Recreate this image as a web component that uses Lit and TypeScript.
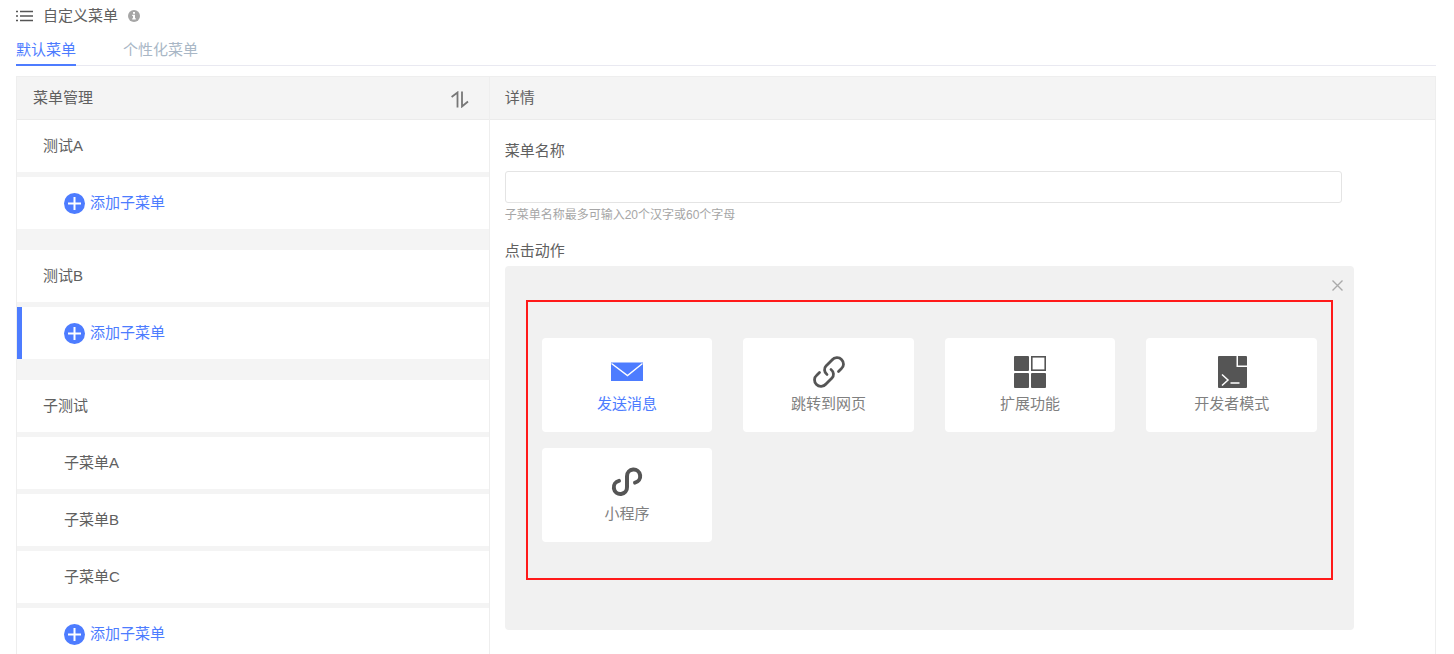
import { LitElement, html, css, svg, nothing } from "lit";
import { customElement, state } from "lit/decorators.js";
import { classMap } from "lit/directives/class-map.js";

interface MenuGroup {
  name: string;
  children: string[];
}

const GROUPS: MenuGroup[] = [
  { name: "测试A", children: [] },
  { name: "测试B", children: [] },
  { name: "子测试", children: ["子菜单A", "子菜单B", "子菜单C"] },
];

const ACTIONS = [
  {
    label: "发送消息",
    icon: svg`<path d="M0 6.500h32V25H0z" fill="currentColor"/><path d="M.5 7.500L16.500 19.500 31.500 7.500" fill="none" stroke="#fff" stroke-width="1.400"/>`,
  },
  {
    label: "跳转到网页",
    icon: svg`<path d="M14 18.500C10.800 16 11 12 13 10L19 4C21.500 1 26 .8 28.500 3.500 31.300 6.300 31 10.500 28.500 12.500L25.500 15.500M18 13.500C21.200 16 21 20 19 22L13 28C10.500 31 6 31.200 3.500 28.500 .7 25.700 1 21.500 3.500 19.500L6.500 16.500" fill="none" stroke="currentColor" stroke-width="2.800" stroke-linecap="round"/>`,
  },
  {
    label: "扩展功能",
    icon: svg`<g fill="currentColor"><rect x="0" y="0" width="15" height="15" rx="1"/><rect x="0" y="17" width="15" height="15" rx="1"/><rect x="17" y="17" width="15" height="15" rx="1"/></g><rect x="17.800" y=".8" width="13.400" height="13.400" fill="none" stroke="currentColor" stroke-width="1.600"/>`,
  },
  {
    label: "开发者模式",
    icon: svg`<path d="M2 0h18.500v11H31v20a1 1 0 0 1-1 1H3a1 1 0 0 1-1-1V1a1 1 0 0 1 1-1z" fill="currentColor"/><path d="M22 0h8a1 1 0 0 1 1 1v8.500h-9z" fill="currentColor"/><path d="M6 18.500l6 5.500-6 5.500M14.500 27h9" fill="none" stroke="#fff" stroke-width="1.500"/>`,
  },
  {
    label: "小程序",
    icon: svg`<path d="M24 16.600A6.600 6.600 0 1 0 16 10.200V21A6.600 6.600 0 1 1 8 14.900" fill="none" stroke="currentColor" stroke-width="4" stroke-linecap="round"/>`,
  },
];

@customElement("app-root")
export class AppRoot extends LitElement {
  @state() private tab = 0;
  @state() private action = 0;
  @state() private current = 1;

  static styles = css`
    :host {
      display: block;
      box-sizing: border-box;
      height: 100vh;
      overflow-y: auto;
      scrollbar-width: none;
      padding: 4px 18px 0 16px;
      background: #fff;
      color: #606060;
      font: 400 15px/24px "Liberation Sans", "Noto Sans CJK SC", sans-serif;
    }
    * { box-sizing: border-box; }
    h1, h2, p { margin: 0; font: inherit; }
    button {
      padding: 0;
      border: 0;
      background: none;
      color: inherit;
      font: inherit;
      cursor: pointer;
    }
    svg { display: block; flex: none; }
    .title {
      display: flex;
      align-items: center;
      gap: 10px;
    }
    .info { color: #a6a6a6; }
    .tabs {
      display: flex;
      gap: 47px;
      height: 38px;
      border-bottom: 1px solid #e9e9f1;
    }
    .tab {
      height: 38px;
      padding-top: 7px;
      border-bottom: 2px solid transparent;
      color: #a9b7c6;
    }
    .tab.on { color: #4d7cff; border-color: #4d7cff; }
    .board {
      display: grid;
      grid-template-columns: 1fr 2fr;
      margin-top: 10px;
      border: 1px solid #eee;
    }
    .side { background: #f4f4f4; border-right: 1px solid #eee; }
    .head {
      display: flex;
      align-items: center;
      justify-content: space-between;
      height: 43px;
      padding: 0 20px 0 16px;
      background: #f4f4f4;
      border-bottom: 1px solid #ebebeb;
    }
    .detail .head { padding-left: 15px; }
    .sort { color: #777; padding-top: 3px; }
    .list { display: grid; gap: 21px; }
    .group { display: grid; gap: 5px; }
    .row {
      display: flex;
      align-items: center;
      gap: 5px;
      height: 52px;
      padding: 0 26px;
      background: #fff;
      text-align: left;
    }
    .row.sub { padding-left: 47px; }
    .row.add { color: #4d7cff; }
    .row.current { border-left: 5px solid #4d7cff; padding-left: 42px; }
    .form { padding: 19px 81px 24px 15px; }
    .label { display: block; }
    .input {
      display: block;
      width: calc(100% - 12px);
      height: 32px;
      margin-top: 8px;
      padding: 0 10px;
      border: 1px solid #e4e4e4;
      border-radius: 3px;
      color: inherit;
      font: inherit;
      outline: none;
    }
    .hint {
      margin-bottom: 12px;
      color: #a6a6a6;
      font-size: 12px;
    }
    .panel {
      margin-top: 3px;
      padding: 0 21px 50px;
      border-radius: 4px;
      background: #f1f1f1;
    }
    .bar {
      display: flex;
      justify-content: flex-end;
      align-items: center;
      height: 34px;
      margin-right: -10px;
      padding-top: 5px;
    }
    .close { color: #aaa; }
    .cards {
      display: grid;
      grid-template-columns: repeat(4, 1fr);
      gap: 16px 31px;
      padding: 36px 14px;
      border: 2px solid #ff1a1a;
    }
    .card {
      display: flex;
      flex-direction: column;
      align-items: center;
      height: 94px;
      padding-top: 18px;
      gap: 4px;
      border-radius: 4px;
      background: #fff;
      color: #555;
    }
    .caption { color: #808080; }
    .card.on, .card.on .caption { color: #4d7cff; }
  `;

  private addRow(index: number) {
    const current = index === this.current;
    return html`<button
      class=${classMap({ row: true, sub: true, add: true, current })}
      @click=${() => (this.current = index)}
    >
      <svg width="21" height="21" viewBox="0 0 21 21" aria-hidden="true">
        <circle cx="10.5" cy="10.5" r="10.5" fill="#4d7cff" />
        <path d="M10.500 4v13M4 10.500h13" stroke="#fff" stroke-width="2" />
      </svg>
      <span>添加子菜单</span>
    </button>`;
  }

  render() {
    return html`
      <header class="title">
        <svg width="17" height="12" viewBox="0 0 17 12" aria-hidden="true">
          <path d="M4 1.500h13M4 6h13M4 10.500h13M0 1.500h2M0 6h2M0 10.500h2" stroke="#555" stroke-width="1.700" />
        </svg>
        <h1>自定义菜单</h1>
        <svg class="info" width="12" height="12" viewBox="0 0 12 12" aria-hidden="true">
          <circle cx="6" cy="6" r="6" fill="currentColor" />
          <path d="M5 2h2v1.700H5zM4.200 4.700H7v3.600h.8v1.200H4.200V8.300H5V5.900h-.8z" fill="#fff" />
        </svg>
      </header>
      <nav class="tabs">
        ${["默认菜单", "个性化菜单"].map(
          (name, i) => html`<button
            class=${classMap({ tab: true, on: i === this.tab })}
            @click=${() => (this.tab = i)}
          >${name}</button>`
        )}
      </nav>
      <main class="board">
        <section class="side">
          <div class="head">
            <h2>菜单管理</h2>
            <button class="sort" aria-label="排序">
              <svg width="18" height="17" viewBox="0 0 18 17" fill="none" stroke="currentColor" stroke-width="1.800">
                <path d="M.6 6L6.500 1.500V16.500M11 .5V15.500l6-5" />
              </svg>
            </button>
          </div>
          <div class="list">
            ${GROUPS.map(
              (group, i) => html`<div class="group">
                <button class="row">${group.name}</button>
                ${group.children.length
                  ? group.children.map((name) => html`<button class="row sub">${name}</button>`)
                  : nothing}
                ${this.addRow(i)}
              </div>`
            )}
          </div>
        </section>
        <section class="detail">
          <div class="head"><h2>详情</h2></div>
          <div class="form">
            <label class="label" for="name">菜单名称</label>
            <input class="input" id="name" type="text" aria-describedby="hint" />
            <p class="hint" id="hint">子菜单名称最多可输入20个汉字或60个字母</p>
            <p class="label">点击动作</p>
            <div class="panel">
              <div class="bar">
                <button class="close" aria-label="关闭">
                  <svg width="11" height="11" viewBox="0 0 11 11" fill="none" stroke="currentColor" stroke-width="1.400">
                    <path d="M.5.5l10 10M10.500.5l-10 10" />
                  </svg>
                </button>
              </div>
              <div class="cards">
                ${ACTIONS.map(
                  (item, i) => html`<button
                    class=${classMap({ card: true, on: i === this.action })}
                    @click=${() => (this.action = i)}
                  >
                    <svg width="32" height="32" viewBox="0 0 32 32" aria-hidden="true">${item.icon}</svg>
                    <span class="caption">${item.label}</span>
                  </button>`
                )}
              </div>
            </div>
          </div>
        </section>
      </main>
    `;
  }
}
